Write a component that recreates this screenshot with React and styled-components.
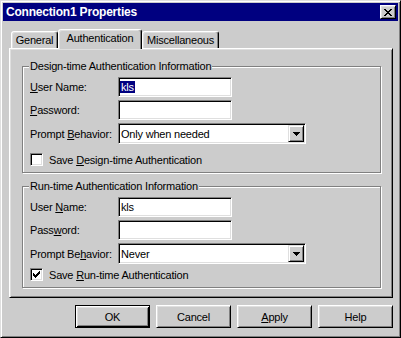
import styled, { createGlobalStyle } from 'styled-components'

const face = '#cccccc'

const GlobalStyle = createGlobalStyle`
  body {
    margin: 0;
    background: ${face};
    font-family: "Liberation Sans", Arial, sans-serif;
    font-size: 11px;
    letter-spacing: -0.2px;
    color: #000;
  }
`

const Window = styled.div`
  box-sizing: border-box;
  width: 401px;
  height: 338px;
  background: ${face};
  border: 1px solid;
  border-color: #dfdfdf #000 #000 #dfdfdf;
  box-shadow: inset 1px 1px 0 #fff, inset -1px -1px 0 #808080;
  padding: 2px;
  display: flex;
  flex-direction: column;
`

const TitleBar = styled.div`
  height: 18px;
  flex: none;
  background: #000080;
  color: #fff;
  font-weight: bold;
  font-size: 12px;
  display: flex;
  align-items: center;
  justify-content: space-between;
  padding: 0 2px 0 3px;
`

const CloseButton = styled.div`
  box-sizing: border-box;
  width: 16px;
  height: 14px;
  background: ${face};
  border: 1px solid;
  border-color: #fff #000 #000 #fff;
  box-shadow: inset 1px 1px 0 #dfdfdf, inset -1px -1px 0 #808080;
  display: flex;
  align-items: center;
  justify-content: center;
  padding-right: 1px;
`

const Body = styled.div`
  flex: 1;
  padding: 8px 5px 0 6px;
  display: flex;
  flex-direction: column;
`

const TabRow = styled.div`
  height: 19px;
  display: flex;
  align-items: flex-end;
  padding-left: 2px;
`

const Tab = styled.div`
  box-sizing: border-box;
  width: ${p => p.$w}px;
  height: ${p => (p.$active ? 20 : 17)}px;
  margin-bottom: ${p => (p.$active ? -1 : 0)}px;
  position: relative;
  z-index: ${p => (p.$active ? 1 : 0)};
  background: ${face};
  border: 1px solid;
  border-bottom: none;
  border-color: #fff #000 transparent #fff;
  border-radius: 3px 3px 0 0;
  box-shadow: inset -1px 0 0 #808080, inset 1px 1px 0 #dfdfdf;
  text-align: center;
  line-height: 13px;
  padding-top: ${p => (p.$active ? 2 : 2)}px;
`

const Panel = styled.div`
  box-sizing: border-box;
  height: 250px;
  border: 1px solid;
  border-color: #fff #000 #000 #fff;
  box-shadow: inset 1px 1px 0 #dfdfdf, inset -1px -1px 0 #808080;
  padding: 17px 11px 0 12px;
  display: flex;
  flex-direction: column;
`

const Group = styled.div`
  position: relative;
  border: 1px solid #808080;
  box-shadow: inset 1px 1px 0 #fff, 1px 1px 0 #fff;
  padding: 10px 7px 6px;
  margin-top: ${p => p.$top}px;
  display: flex;
  flex-direction: column;
  gap: 3px;
`

const Legend = styled.span`
  position: absolute;
  top: -7px;
  left: 6px;
  padding: 0 1px;
  line-height: 13px;
  background: ${face};
`

const Row = styled.div`
  display: flex;
  align-items: center;
`

const Label = styled.span`
  width: 88px;
  flex: none;
`

const Field = styled.div`
  box-sizing: border-box;
  width: ${p => p.$w}px;
  height: ${p => p.$h}px;
  background: #fff;
  border: 1px solid;
  border-color: #808080 #fff #fff #808080;
  box-shadow: inset 1px 1px 0 #000, inset -1px -1px 0 #dfdfdf;
  padding: 1px;
  display: flex;
  align-items: center;
`

const Value = styled.span`
  padding: 0 ${p => p.$pad}px;
  line-height: 12px;
  background: ${p => (p.$selected ? '#000080' : 'transparent')};
  color: ${p => (p.$selected ? '#fff' : '#000')};
  flex: 1;
  flex-grow: ${p => (p.$selected ? 0 : 1)};
`

const DropButton = styled.div`
  box-sizing: border-box;
  width: 16px;
  height: 100%;
  margin-left: auto;
  background: ${face};
  border: 1px solid;
  border-color: #dfdfdf #000 #000 #dfdfdf;
  box-shadow: inset 1px 1px 0 #fff, inset -1px -1px 0 #808080;
  display: flex;
  align-items: center;
  justify-content: center;
`

const CheckRow = styled.div`
  display: flex;
  align-items: center;
  margin-top: ${p => p.$gap}px;
`

const CheckBox = styled.div`
  box-sizing: border-box;
  width: 13px;
  height: 13px;
  background: #fff;
  border: 1px solid;
  border-color: #808080 #fff #fff #808080;
  box-shadow: inset 1px 1px 0 #000, inset -1px -1px 0 #dfdfdf;
  display: flex;
  align-items: center;
  justify-content: center;
  margin-right: 6px;
`

const ButtonRow = styled.div`
  display: flex;
  justify-content: flex-end;
  gap: 6px;
  margin-top: 7px;
`

const Button = styled.div`
  box-sizing: border-box;
  width: 75px;
  height: 23px;
  background: ${face};
  border: 1px solid;
  border-color: ${p => (p.$default ? '#000' : '#fff #000 #000 #fff')};
  box-shadow: ${p =>
    p.$default
      ? 'inset 1px 1px 0 #fff, inset -1px -1px 0 #000, inset 2px 2px 0 #dfdfdf, inset -2px -2px 0 #808080'
      : 'inset 1px 1px 0 #dfdfdf, inset -1px -1px 0 #808080'};
  display: flex;
  align-items: center;
  justify-content: center;
`

function CloseGlyph() {
  return (
    <svg width="8" height="7" viewBox="0 0 8 7" shapeRendering="crispEdges">
      <path
        fill="#000"
        d="M0 0h2v1H0z M6 0h2v1H6z M1 1h2v1H1z M5 1h2v1H5z M2 2h4v1H2z M3 3h2v1H3z M2 4h4v1H2z M1 5h2v1H1z M5 5h2v1H5z M0 6h2v1H0z M6 6h2v1H6z"
      />
    </svg>
  )
}

function Arrow() {
  return (
    <svg width="7" height="4" viewBox="0 0 7 4" shapeRendering="crispEdges">
      <path fill="#000" d="M0 0h7v1H0z M1 1h5v1H1z M2 2h3v1H2z M3 3h1v1H3z" />
    </svg>
  )
}

function Check() {
  return (
    <svg width="7" height="7" viewBox="0 0 7 7" shapeRendering="crispEdges">
      <path
        fill="#000"
        d="M0 2h1v3H0z M1 3h1v3H1z M2 4h1v3H2z M3 3h1v3H3z M4 2h1v3H4z M5 1h1v3H5z M6 0h1v3H6z"
      />
    </svg>
  )
}

function AuthGroup({ title, top, names, user, selected, prompt, save, checked, checkGap }) {
  return (
    <Group $top={top}>
      <Legend>{title}</Legend>
      <Row>
        <Label>{names[0]}</Label>
        <Field $w={114} $h={20}>
          <Value $pad={1} $selected={selected}>{user}</Value>
        </Field>
      </Row>
      <Row>
        <Label>{names[1]}</Label>
        <Field $w={114} $h={20} />
      </Row>
      <Row>
        <Label>{names[2]}</Label>
        <Field $w={188} $h={21}>
          <Value $pad={1}>{prompt}</Value>
          <DropButton>
            <Arrow />
          </DropButton>
        </Field>
      </Row>
      <CheckRow $gap={checkGap}>
        <CheckBox>{checked && <Check />}</CheckBox>
        <span>{save}</span>
      </CheckRow>
    </Group>
  )
}

const tabs = [
  { name: 'General', w: 47 },
  { name: 'Authentication', w: 84, active: true },
  { name: 'Miscellaneous', w: 77 },
]

export default function App() {
  return (
    <>
      <GlobalStyle />
      <Window>
        <TitleBar>
          <span>Connection1 Properties</span>
          <CloseButton>
            <CloseGlyph />
          </CloseButton>
        </TitleBar>
        <Body>
          <TabRow>
            {tabs.map(t => (
              <Tab key={t.name} $w={t.w} $active={t.active}>{t.name}</Tab>
            ))}
          </TabRow>
          <Panel>
            <AuthGroup
              title="Design-time Authentication Information"
              top={0}
              names={[
                <><u>U</u>ser Name:</>,
                <><u>P</u>assword:</>,
                <>Prompt <u>B</u>ehavior:</>,
              ]}
              user="kls"
              selected
              prompt="Only when needed"
              save={<>Save <u>D</u>esign-time Authentication</>}
              checkGap={6}
            />
            <AuthGroup
              title="Run-time Authentication Information"
              top={13}
              names={[
                <>User <u>N</u>ame:</>,
                <>Pass<u>w</u>ord:</>,
                <>Prompt Be<u>h</u>avior:</>,
              ]}
              user="kls"
              prompt="Never"
              save={<>Save <u>R</u>un-time Authentication</>}
              checked
              checkGap={1}
            />
          </Panel>
          <ButtonRow>
            <Button $default>OK</Button>
            <Button>Cancel</Button>
            <Button><span><u>A</u>pply</span></Button>
            <Button>Help</Button>
          </ButtonRow>
        </Body>
      </Window>
    </>
  )
}
